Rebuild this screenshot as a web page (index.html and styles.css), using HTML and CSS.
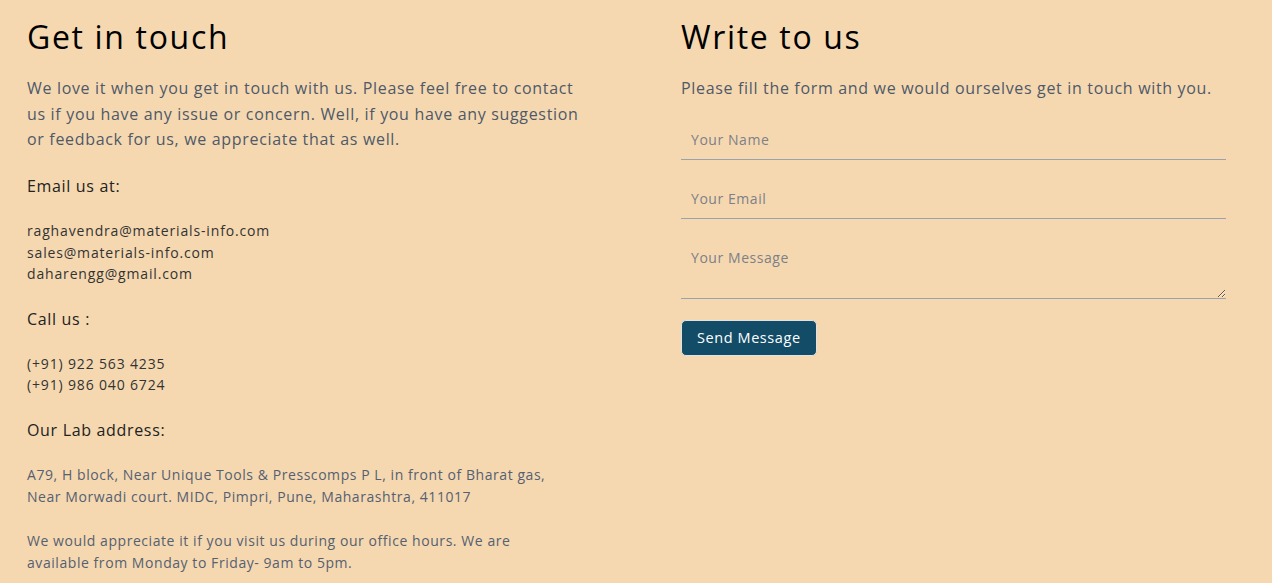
FILE: index.html
```html
<!DOCTYPE html>
<html lang="en">
<head>
<meta charset="utf-8">
<title>Contact</title>
<link rel="stylesheet" href="styles.css">
</head>
<body>
<main class="contact">
  <section class="col info">
    <h2 class="title">Get in touch</h2>
    <p class="lead">We love it when you get in touch with us. Please feel free to contact<br>us if you have any issue or concern. Well, if you have any suggestion<br>or feedback for us, we appreciate that as well.</p>
    <h3 class="label">Email us at:</h3>
    <p class="lines">raghavendra@materials-info.com<br>sales@materials-info.com<br>daharengg@gmail.com</p>
    <h3 class="label">Call us :</h3>
    <p class="lines">(+91) 922 563 4235<br>(+91) 986 040 6724</p>
    <h3 class="label">Our Lab address:</h3>
    <p class="note">A79, H block, Near Unique Tools &amp; Presscomps P L, in front of Bharat gas,<br>Near Morwadi court. MIDC, Pimpri, Pune, Maharashtra, 411017</p>
    <p class="note">We would appreciate it if you visit us during our office hours. We are<br>available from Monday to Friday- 9am to 5pm.</p>
  </section>
  <section class="col form-col">
    <h2 class="title">Write to us</h2>
    <p class="lead">Please fill the form and we would ourselves get in touch with you.</p>
    <form class="form">
      <input class="field" type="text" placeholder="Your Name">
      <input class="field" type="email" placeholder="Your Email">
      <textarea class="field area" placeholder="Your Message"></textarea>
      <button class="send" type="button">Send Message</button>
    </form>
  </section>
</main>
</body>
</html>
```
FILE: styles.css
```css
* { box-sizing: border-box; }
html, body { margin: 0; padding: 0; }
body {
  background: #f5d8b0;
  font-family: "Open Sans", "Liberation Sans", sans-serif;
  color: #4f5968;
  letter-spacing: 0.042em;
}
.contact {
  display: grid;
  grid-template-columns: 545px 545px;
  column-gap: 109px;
  padding: 18px 46px 0 27px;
}
.col { min-width: 0; }
.title {
  margin: 0 0 20px;
  font-size: 32px;
  line-height: 38px;
  font-weight: 400;
  color: #000;
  white-space: nowrap;
  letter-spacing: 0.052em;
}
.lead {
  margin: 0 0 21.5px;
  font-size: 16px;
  line-height: 25.5px;
  white-space: nowrap;
}
.label {
  margin: 0 0 22px;
  font-size: 16px;
  line-height: 24px;
  font-weight: 400;
  color: #222;
}
.lines {
  margin: 0 0 22px;
  font-size: 14px;
  line-height: 21.5px;
  color: #333;
  letter-spacing: 0.06em;
}
.note {
  margin: 0 0 22px;
  font-size: 14px;
  line-height: 22px;
  color: #556070;
  white-space: nowrap;
  letter-spacing: 0.04em;
}
.form {
  display: flex;
  flex-direction: column;
  align-items: flex-start;
  gap: 14px;
  margin-top: -8.5px;
}
.field {
  width: 100%;
  height: 45px;
  padding: 15px 10px 9px;
  border: 0;
  border-bottom: 1px solid #9aa2ae;
  background: transparent;
  font-family: inherit;
  font-size: 14px;
  line-height: 21px;
  letter-spacing: 0.04em;
  color: #333;
  outline: none;
}
.field::placeholder { color: #7d8089; }
.area {
  height: 66px;
  padding-top: 14px;
  resize: vertical;
  display: block;
}
.send {
  margin-top: 7px;
  height: 36px;
  padding: 0 15px;
  background: #124c67;
  color: #fff;
  border: 1px solid #dfe3e6;
  border-radius: 5px;
  font-family: inherit;
  font-size: 14.5px;
  letter-spacing: 0.04em;
}
```
